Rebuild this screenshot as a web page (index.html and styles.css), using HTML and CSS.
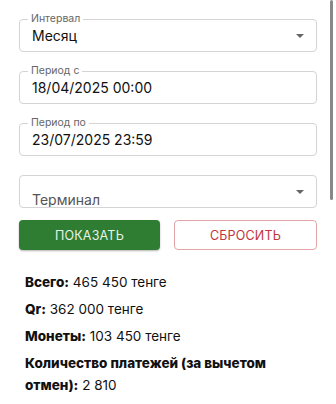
FILE: index.html
```html
<!DOCTYPE html>
<html>
<head>
  <title>Отчёт</title>
  <meta charset="UTF-8">
  <meta name="viewport" content="width=device-width, initial-scale=1.0">
  <link rel="stylesheet" href="styles.css">
</head>
<body>
  <div class="filters">
    <div class="field">
      <span class="field-label">Интервал</span>
      <span class="field-value">Месяц</span>
      <span class="arrow"></span>
    </div>
    <div class="field">
      <span class="field-label">Период с</span>
      <span class="field-value">18/04/2025 00:00</span>
    </div>
    <div class="field">
      <span class="field-label">Период по</span>
      <span class="field-value">23/07/2025 23:59</span>
    </div>
    <div class="field field-empty">
      <span class="field-value placeholder">Терминал</span>
      <span class="arrow"></span>
    </div>
    <div class="buttons">
      <button class="btn btn-show">Показать</button>
      <button class="btn btn-reset">Сбросить</button>
    </div>
  </div>

  <div class="summary">
    <p><b>Всего:</b> 465 450 тенге</p>
    <p><b>Qr:</b> 362 000 тенге</p>
    <p><b>Монеты:</b> 103 450 тенге</p>
    <p><b>Количество платежей (за вычетом отмен):</b> 2 810</p>
  </div>

  <div class="scrollbar"></div>
</body>
</html>
```

FILE: styles.css
```css
body {
  font-family: "Inter", "Roboto", sans-serif;
  margin: 0;
  padding: 19px 19px 0;
  color: #111;
  background: #fff;
  position: relative;
  overflow: hidden;
}
.filters {
  display: flex;
  flex-direction: column;
}
.field {
  position: relative;
  height: 33px;
  border: 1px solid #d4d4d4;
  border-radius: 4px;
  box-sizing: border-box;
  display: flex;
  align-items: center;
  padding: 0 12px;
  margin-bottom: 19px;
}
.field-label {
  position: absolute;
  top: -7px;
  left: 8px;
  padding: 0 3px;
  background: #fff;
  font-size: 10.5px;
  line-height: 12px;
  color: #666;
}
.field-value {
  font-size: 14px;
  color: #111;
}
.field-empty {
  margin-bottom: 12px;
  align-items: flex-end;
  overflow: hidden;
}
.placeholder {
  color: #555;
  line-height: 16px;
  margin-bottom: -1px;
}
.arrow {
  position: absolute;
  right: 12px;
  top: 14px;
  width: 0;
  height: 0;
  border-left: 4px solid transparent;
  border-right: 4px solid transparent;
  border-top: 4px solid #666;
}
.buttons {
  display: flex;
  gap: 14px;
}
.btn {
  flex: 1;
  height: 30px;
  border-radius: 4px;
  font-family: "Inter", "Roboto", sans-serif;
  font-size: 12.5px;
  font-weight: 400;
  text-transform: uppercase;
  letter-spacing: 0.2px;
  cursor: pointer;
}
.btn-show {
  background: #2e7d32;
  color: #e8f3e8;
  border: none;
  box-shadow: 0 1px 2px rgba(0, 0, 0, 0.3);
}
.btn-reset {
  background: #fff;
  color: #c0343c;
  border: 1px solid #e3a4a8;
}
.summary {
  padding: 21px 25px 0 6px;
}
.summary p {
  margin: 0 0 5px;
  font-size: 13.5px;
  line-height: 22px;
}
.summary b {
  font-weight: 800;
}
.scrollbar {
  position: absolute;
  top: 0;
  right: 3px;
  width: 3px;
  height: 200px;
  border-radius: 2px;
  background: #888;
}
```
